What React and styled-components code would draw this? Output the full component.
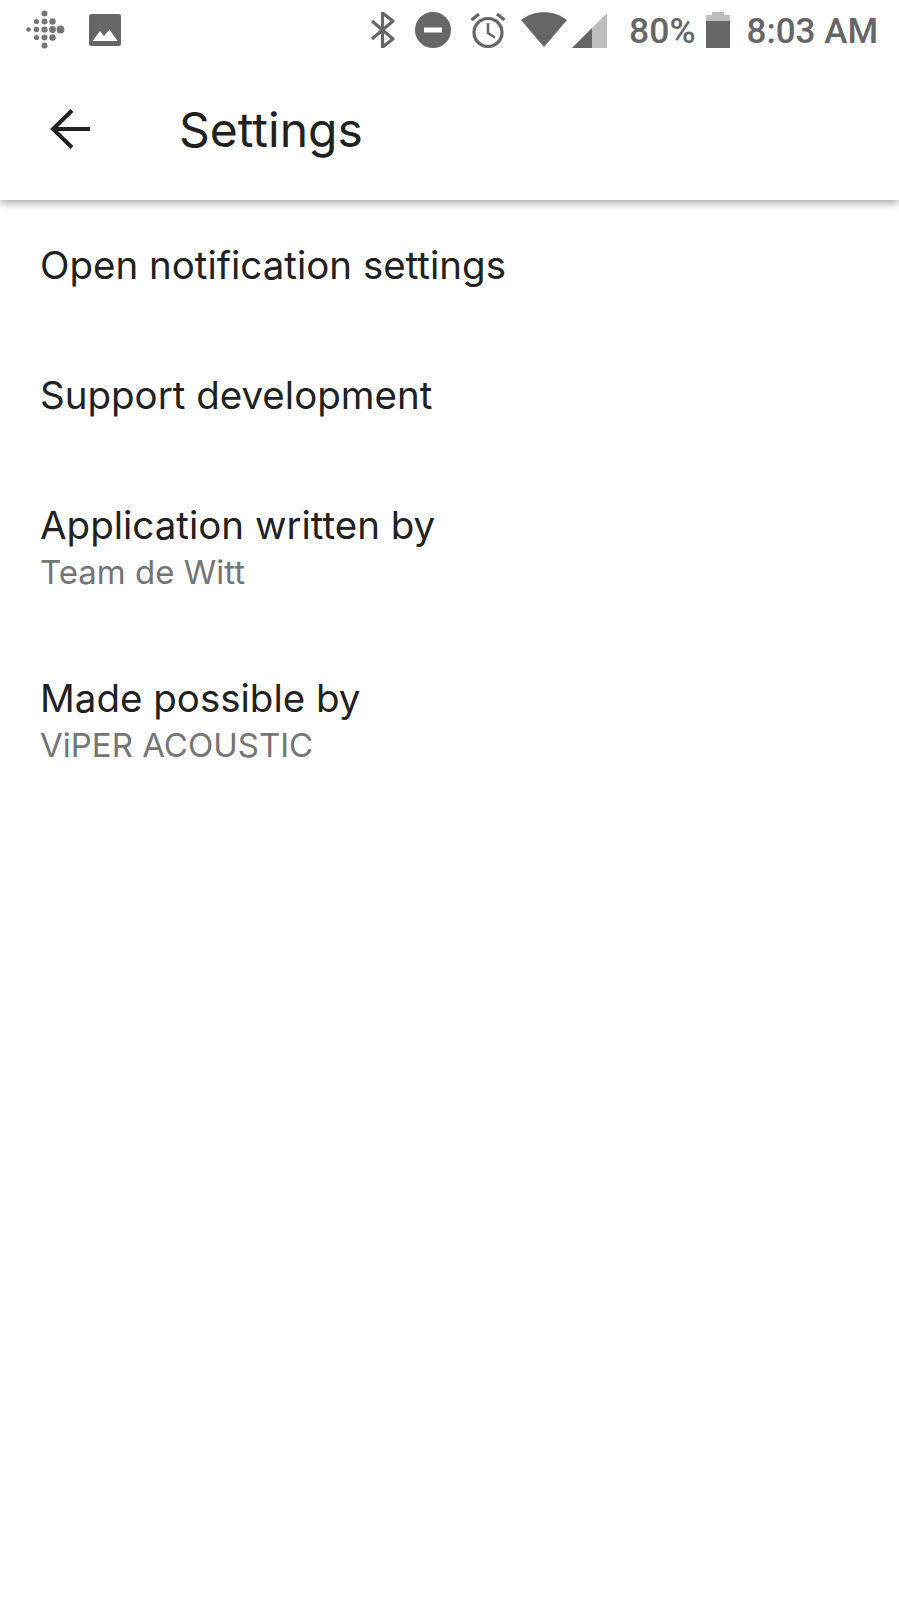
import styled, { createGlobalStyle } from "styled-components";

const GlobalStyle = createGlobalStyle`
  html, body {
    margin: 0;
    padding: 0;
    background: #fff;
  }
`;

const rows = [
  { title: "Open notification settings" },
  { title: "Support development" },
  { title: "Application written by", summary: "Team de Witt" },
  { title: "Made possible by", summary: "ViPER ACOUSTIC" },
];

const FitbitIcon = () => (
  <svg width="40" height="40" viewBox="0 0 40 40" fill="#757575">
    <circle cx="19.500" cy="3.500" r="3" />
    <circle cx="11.500" cy="11.500" r="2.600" />
    <circle cx="19.500" cy="11.500" r="3" />
    <circle cx="27.500" cy="11.500" r="3.200" />
    <circle cx="3.500" cy="19.500" r="2.300" />
    <circle cx="11.500" cy="19.500" r="2.800" />
    <circle cx="19.500" cy="19.500" r="3.100" />
    <circle cx="27.500" cy="19.500" r="3.400" />
    <circle cx="35.500" cy="19.500" r="3.900" />
    <circle cx="11.500" cy="27.500" r="2.600" />
    <circle cx="19.500" cy="27.500" r="3" />
    <circle cx="27.500" cy="27.500" r="3.200" />
    <circle cx="19.500" cy="35.500" r="3" />
  </svg>
);

const ImageIcon = () => (
  <svg width="32" height="32" viewBox="0 0 32 32">
    <rect width="32" height="32" rx="2.500" fill="#666" />
    <path d="M3.500 27 L11 17 L15 22 L20.500 15.500 L28.500 27 Z" fill="#fff" />
  </svg>
);

const BluetoothIcon = () => (
  <svg width="26" height="36" viewBox="0 0 26 36" fill="none" stroke="#666" strokeWidth="3.200">
    <path d="M2 9 L23 27 L12.500 35 V1 L23 9 L2 27" strokeLinejoin="round" />
  </svg>
);

const DndIcon = () => (
  <svg width="36" height="36" viewBox="0 0 36 36">
    <circle cx="18" cy="18" r="18" fill="#666" />
    <rect x="9" y="15.500" width="18" height="5" fill="#fff" />
  </svg>
);

const AlarmIcon = () => (
  <svg width="36" height="36" viewBox="0 0 36 36" fill="none" stroke="#666" strokeWidth="3.200">
    <circle cx="18" cy="20.500" r="14" />
    <path d="M18 11 V21 L25 25.500" strokeWidth="2.500" />
    <path d="M1.500 8 L9 2 M34.500 8 L27 2" />
  </svg>
);

const WifiIcon = () => (
  <svg width="46" height="36" viewBox="0 0 46 36">
    <path d="M0 8 C13 -2.500 33 -2.500 46 8 L23 35 Z" fill="#666" />
  </svg>
);

const SignalIcon = () => (
  <svg width="35" height="35" viewBox="0 0 35 35">
    <path d="M0 35 L35 0 V35 Z" fill="#bdbdbd" />
    <path d="M0 35 L20 15 V35 Z" fill="#666" />
  </svg>
);

const BatteryIcon = () => (
  <svg width="24" height="36" viewBox="0 0 24 36">
    <path d="M6 0 H18 V3 H24 V9 H0 V3 H6 Z" fill="#bdbdbd" />
    <rect y="9" width="24" height="27" fill="#666" />
  </svg>
);

const BackIcon = () => (
  <svg width="40" height="40" viewBox="0 0 40 40" fill="none" stroke="#212121" strokeWidth="4">
    <path d="M40 20 H3" />
    <path d="M22 1.500 L3 20 L22 38.500" />
  </svg>
);

export default function App() {
  return (
    <Page>
      <GlobalStyle />
      <Header>
        <StatusBar>
          <NotificationIcons>
            <FitbitIcon />
            <ImageIcon />
          </NotificationIcons>
          <SystemIcons>
            <IconSlot $gap={19}>
              <BluetoothIcon />
            </IconSlot>
            <IconSlot $gap={19}>
              <DndIcon />
            </IconSlot>
            <IconSlot $gap={15}>
              <AlarmIcon />
            </IconSlot>
            <IconSlot $gap={5}>
              <WifiIcon />
            </IconSlot>
            <IconSlot $gap={22}>
              <SignalIcon />
            </IconSlot>
            <Percent>80%</Percent>
            <IconSlot $gap={17}>
              <BatteryIcon />
            </IconSlot>
            <Clock>8:03 AM</Clock>
          </SystemIcons>
        </StatusBar>
        <Toolbar>
          <BackIcon />
          <Title>Settings</Title>
        </Toolbar>
      </Header>
      <List>
        {rows.map((row) => (
          <Row key={row.title} $hasSummary={!!row.summary}>
            <RowTitle>{row.title}</RowTitle>
            {row.summary && <Summary>{row.summary}</Summary>}
          </Row>
        ))}
      </List>
    </Page>
  );
}

const Page = styled.div`
  width: 899px;
  height: 1599px;
  overflow: hidden;
  background: #fff;
  font-family: Inter, Roboto, "Noto Sans", sans-serif;
`;

const Header = styled.header`
  height: 200px;
  box-shadow: 0 3px 8px rgba(0, 0, 0, 0.35);
`;

const StatusBar = styled.div`
  display: flex;
  justify-content: space-between;
  align-items: center;
  height: 60px;
  padding: 0 21px 0 25px;
`;

const NotificationIcons = styled.div`
  display: flex;
  align-items: center;
  gap: 24px;
`;

const SystemIcons = styled.div`
  display: flex;
  align-items: center;
`;

const IconSlot = styled.span`
  display: flex;
  margin-right: ${(p) => p.$gap}px;
`;

const Percent = styled.span`
  font-family: Roboto, sans-serif;
  font-size: 35.500px;
  font-weight: 500;
  color: #666;
  margin-right: 10px;
  padding-top: 2px;
`;

const Clock = styled.span`
  font-family: Roboto, sans-serif;
  font-size: 35px;
  font-weight: 500;
  color: #666;
  padding-top: 2px;
`;

const Toolbar = styled.div`
  display: flex;
  align-items: center;
  gap: 89px;
  height: 140px;
  padding-left: 50px;
  box-sizing: border-box;
  padding-bottom: 2px;
`;

const Title = styled.h1`
  margin: 0;
  font-size: 48px;
  font-weight: 400;
  color: #212121;
`;

const List = styled.div`
  display: flex;
  flex-direction: column;
  padding: 0 40px;
`;

const Row = styled.div`
  display: flex;
  flex-direction: column;
  justify-content: center;
  box-sizing: border-box;
  height: ${(p) => (p.$hasSummary ? "173px" : "130px")};
  padding-top: ${(p) => (p.$hasSummary ? "5px" : "0")};
`;

const RowTitle = styled.div`
  font-size: 38.500px;
  line-height: 46px;
  color: #212121;
`;

const Summary = styled.div`
  font-size: 33px;
  line-height: 48px;
  color: #757575;
`;
